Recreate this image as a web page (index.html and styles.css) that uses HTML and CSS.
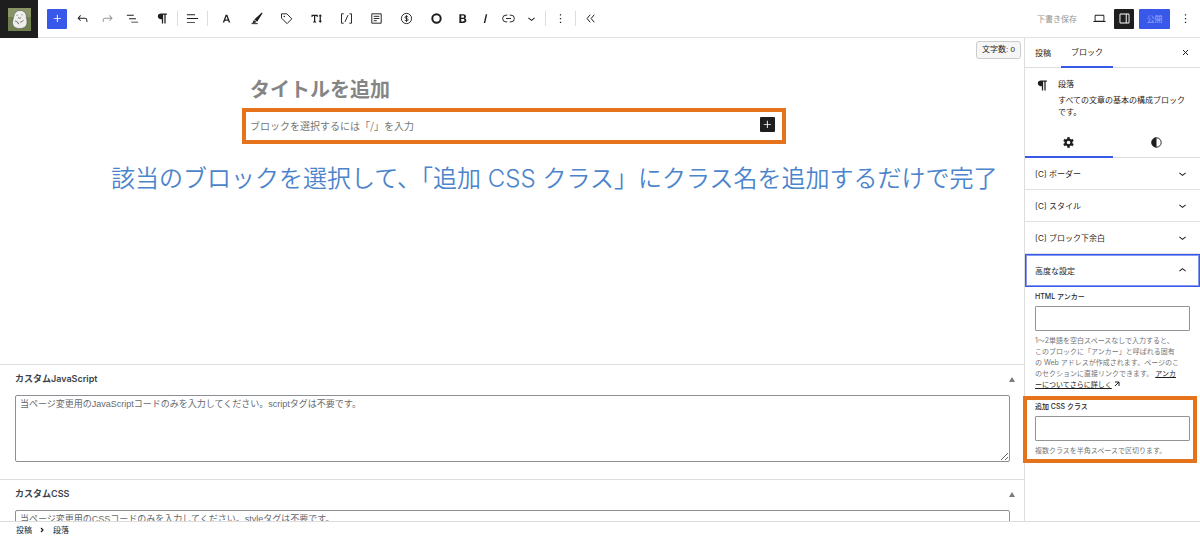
FILE: index.html
```html
<!DOCTYPE html>
<html lang="ja">
<head>
<meta charset="utf-8">
<title>投稿を編集</title>
<link rel="stylesheet" href="styles.css">
</head>
<body>
<header class="topbar">
  <a class="site-logo" href="#" aria-label="サイト">
    <svg width="23" height="23" viewBox="0 0 23 23">
      <rect width="23" height="23" fill="#71804f"/>
      <rect width="23" height="9" fill="#899566"/>
      <path d="M12 2.500c4 0 6.300 2.600 6.300 6.500 0 1.500.7 2.500.7 5 0 4-2.500 6.500-7 6.500s-7.500-2-7.500-6c0-2 .6-3.200 1-5C6.200 5.500 8 2.500 12 2.500z" fill="#eeeeec" stroke="#444" stroke-width=".5"/>
      <path d="M8.500 7.300h1M13.500 6.800h1M10 9.500c1 1 2.500.9 3.200-.2M7 13c1.500 0 2.500 1 3.500 2M15.500 12.500c-1.500.5-2 1.500-3.500 2M9 14.500l2 1.500" fill="none" stroke="#555" stroke-width=".8"/>
    </svg>
  </a>
  <div class="tools">
    <button class="add" aria-label="追加"><svg class="ic" viewBox="0 0 24 24"><path d="M11 12.500V17.500H12.500V12.500H17.500V11H12.500V6H11V11H6V12.500H11Z"/></svg></button>
    <div class="group group-history">
      <button class="tool tool-m" aria-label="元に戻す"><svg class="ic" viewBox="0 0 24 24"><path d="M18.300 11.700c-.6-.6-1.400-.9-2.300-.9H6.700l2.900-3.300-1.100-1-4.500 5L8.500 16l1-1-2.700-2.700H16c.5 0 .9.200 1.300.5 1 1 1 3.400 1 4.500v.3h1.500v-.2c0-1.500 0-4.300-1.500-5.700z"/></svg></button>
      <button class="tool tool-m faded" aria-label="やり直し"><svg class="ic" viewBox="0 0 24 24"><path d="M15.600 6.500l-1.100 1 2.900 3.300H8c-.9 0-1.700.3-2.300.9-1.400 1.500-1.400 4.200-1.400 5.600v.2h1.500v-.3c0-1.100 0-3.500 1-4.500.3-.3.7-.5 1.300-.5h9.200L14.500 15l1.100 1.100 4.600-4.600-4.600-5z"/></svg></button>
      <button class="tool tool-m" aria-label="リスト表示"><svg class="ic" viewBox="0 0 24 24"><path d="M3 6h11v1.500H3V6Zm3.500 5.500h11V13h-11v-1.500ZM21 17H10v1.500h11V17Z"/></svg></button>
    </div>
    <button class="tool tool-l" aria-label="段落"><svg class="ic" viewBox="0 0 24 24"><path d="M4.500 8.500C4.500 5.500 6.700 4 9.500 4H19v2h-2v14h-2V6h-2v14h-2v-7H9.500c-2.800 0-5-1.600-5-4.500z"/></svg></button>
    <span class="sep"></span>
    <button class="tool tool-l" aria-label="配置"><svg class="ic" viewBox="0 0 24 24"><path d="M3 5.200h13v1.500H3zM3 11.300h18v1.500H3zM3 17.400h13v1.500H3z"/></svg></button>
    <span class="sep"></span>
    <div class="group group-format">
      <button class="tool tool-l" aria-label="文字"><svg class="ic" viewBox="0 0 24 24"><path d="M10.700 6h2.600L18 18.500h-2.400l-1-3H9.400l-1.100 3H6L10.700 6zM12 8.200l-1.900 5.400h3.800L12 8.200z"/></svg></button>
      <button class="tool tool-l" aria-label="マーカー"><svg class="ic" viewBox="0 0 24 24"><path d="M20.500 2.500l1.200 1.200L13 17l-4.500-3.500zM7.800 14.200l4 3.300c-1.800 1.600-4.300 2-6.300 1.500z"/><path d="M4 19.500h10v1.500H4z"/></svg></button>
      <button class="tool tool-l" aria-label="タグ"><svg class="ic" viewBox="0 0 24 24"><path d="M4 4.500h8.500l8 8-7.500 7.700-9-8.700z" fill="none" stroke="currentColor" stroke-width="1.500" stroke-linejoin="round"/><circle cx="8.500" cy="8.700" r="1.200"/></svg></button>
      <button class="tool tool-l" aria-label="文字サイズ"><svg class="ic" viewBox="0 0 24 24"><path d="M4 6h10v3.500h-1.500L12 8h-2v8.500l1.500.5v1.500h-5V17l1.500-.5V8H6l-.5 1.500H4zM18 5l2.800 3.500H19v7h1.800L18 19l-2.800-3.500H17v-7h-1.800z"/></svg></button>
      <button class="tool tool-l" aria-label="ショートコード"><svg class="ic" viewBox="0 0 24 24"><path d="M7.500 4.500H4v15h3.500M16.500 4.500H20v15h-3.500M14.500 6.500l-5 11" fill="none" stroke="currentColor" stroke-width="1.500"/></svg></button>
      <button class="tool tool-l" aria-label="メモ"><svg class="ic" viewBox="0 0 24 24"><path d="M4.500 4.500h15v15h-15zM7.500 8.500h9M7.500 12h9M7.500 15.500h5" fill="none" stroke="currentColor" stroke-width="1.500"/></svg></button>
      <button class="tool tool-l" aria-label="価格"><svg class="ic" viewBox="0 0 24 24"><circle cx="12" cy="12" r="8.200" fill="none" stroke="currentColor" stroke-width="1.500"/><path d="M14.700 9.700c-.6-1-1.500-1.300-2.700-1.300-1.400 0-2.500.6-2.500 1.700 0 2.600 5.100 1.300 5.100 3.800 0 1.300-1.200 2-2.600 2-1.300 0-2.400-.6-2.800-1.600M12 6.800v10.400" fill="none" stroke="currentColor" stroke-width="1.500"/></svg></button>
      <button class="tool tool-l" aria-label="丸"><svg class="ic" viewBox="0 0 24 24"><circle cx="12" cy="12" r="6.700" fill="none" stroke="currentColor" stroke-width="3.200"/></svg></button>
      <button class="tool tool-s" aria-label="太字"><svg class="ic" viewBox="0 0 24 24"><path d="M7 5h6c2.800 0 4.500 1.400 4.500 3.600 0 1.500-.8 2.600-2 3.100 1.600.4 2.700 1.600 2.700 3.400 0 2.500-1.900 3.900-4.900 3.900H7V5zm3 2.300v3.400h2.500c1.300 0 2-.6 2-1.700s-.7-1.700-2-1.700H10zm0 5.600v3.800h2.800c1.500 0 2.300-.6 2.300-1.900s-.8-1.900-2.300-1.900H10z"/></svg></button>
      <button class="tool tool-s" aria-label="斜体"><svg class="ic" viewBox="0 0 24 24"><path d="M12.500 5h2.300L11.500 19H9.200z"/></svg></button>
      <button class="tool tool-s" aria-label="リンク"><svg class="ic" viewBox="0 0 24 24"><path d="M10 17.400H8a5.400 5.400 0 0 1 0-10.800h2M14 6.600h2a5.400 5.400 0 0 1 0 10.800h-2M8 12h8" fill="none" stroke="currentColor" stroke-width="1.500"/></svg></button>
      <button class="tool tool-s" aria-label="さらに表示"><svg class="ic" viewBox="0 0 24 24"><path d="M17.500 11.600L12 16l-5.500-4.400.9-1.200L12 14l4.500-3.600 1 1.200z"/></svg></button>
    </div>
    <span class="sep"></span>
    <button class="tool tool-l" aria-label="オプション"><svg class="ic" viewBox="0 0 24 24"><path d="M13 19h-2v-2h2v2zm0-6h-2v-2h2v2zm0-6h-2V5h2v2z"/></svg></button>
    <span class="sep"></span>
    <button class="tool tool-l" aria-label="折りたたむ"><svg class="ic" viewBox="0 0 24 24"><path d="M11.500 6L6.500 12l5 6M18 6l-5 6 5 6" fill="none" stroke="currentColor" stroke-width="1.600"/></svg></button>
  </div>
  <div class="actions">
    <button class="save">下書き保存</button>
    <button class="action" aria-label="表示"><svg class="ic" viewBox="0 0 24 24"><path d="M20.500 16h-.7V8c0-1.100-.9-2-2-2H6.200c-1.100 0-2 .9-2 2v8h-.7c-.8 0-1.500.7-1.500 1.500h20c0-.8-.7-1.500-1.500-1.500zM5.700 8c0-.3.200-.5.500-.5h11.600c.3 0 .5.200.5.500v7.600H5.700V8z"/></svg></button>
    <button class="action action-on" aria-label="設定"><svg class="ic" viewBox="0 0 24 24"><path d="M18 4H6c-1.100 0-2 .9-2 2v12c0 1.100.9 2 2 2h12c1.100 0 2-.9 2-2V6c0-1.100-.9-2-2-2zm-4 14.500H6c-.3 0-.5-.2-.5-.5V6c0-.3.2-.5.5-.5h8v13zm4.500-.5c0 .3-.2.500-.5.500h-2.500v-13H18c.3 0 .5.200.5.500v12z"/></svg></button>
    <button class="publish">公開</button>
    <button class="action" aria-label="オプション"><svg class="ic" viewBox="0 0 24 24"><path d="M13 19h-2v-2h2v2zm0-6h-2v-2h2v2zm0-6h-2V5h2v2z"/></svg></button>
  </div>
</header>

<div class="workspace">
  <main class="editor">
    <section class="canvas">
      <span class="count">文字数: 0</span>
      <div class="post">
        <h1 class="post-title">タイトルを追加</h1>
        <div class="block marked">
          <p class="prompt">ブロックを選択するには「/」を入力</p>
          <button class="inserter" aria-label="ブロックを追加"><svg class="ic" viewBox="0 0 24 24"><path d="M11 12.500V17.500H12.500V12.500H17.500V11H12.500V6H11V11H6V12.500H11Z"/></svg></button>
        </div>
      </div>
      <p class="note">該当のブロックを選択して、「追加 CSS クラス」にクラス名を追加するだけで完了</p>
    </section>
    <section class="metaboxes">
      <div class="metabox">
        <div class="metabox-head"><label for="js">カスタムJavaScript</label><button class="toggle" aria-label="閉じる"><svg width="6" height="5" viewBox="0 0 6 5"><path d="M3 0l3 5H0z"/></svg></button></div>
        <textarea id="js" class="code" placeholder="当ページ変更用のJavaScriptコードのみを入力してください。scriptタグは不要です。"></textarea>
      </div>
      <div class="metabox">
        <div class="metabox-head"><label for="css">カスタムCSS</label><button class="toggle" aria-label="閉じる"><svg width="6" height="5" viewBox="0 0 6 5"><path d="M3 0l3 5H0z"/></svg></button></div>
        <textarea id="css" class="code" placeholder="当ページ変更用のCSSコードのみを入力してください。styleタグは不要です。"></textarea>
      </div>
    </section>
  </main>

  <aside class="sidebar">
    <div class="tabs">
      <button class="tab">投稿</button>
      <button class="tab tab-on">ブロック</button>
      <button class="close" aria-label="閉じる"><svg width="7" height="7" viewBox="0 0 7 7"><path d="M1 1l5 5M6 1L1 6" stroke="currentColor"/></svg></button>
    </div>
    <div class="card">
      <svg class="ic" viewBox="0 0 24 24"><path d="M4.500 8.500C4.500 5.500 6.700 4 9.500 4H19v2h-2v14h-2V6h-2v14h-2v-7H9.500c-2.800 0-5-1.600-5-4.500z"/></svg>
      <div>
        <h2 class="card-title">段落</h2>
        <p class="card-text">すべての文章の基本の構成ブロックです。</p>
      </div>
    </div>
    <div class="subtabs">
      <button class="subtab subtab-on" aria-label="設定"><svg class="ic" viewBox="0 0 24 24"><g transform="translate(12 12)"><rect x="-2" y="-8.500" width="4" height="17"/><rect x="-2" y="-8.500" width="4" height="17" transform="rotate(60)"/><rect x="-2" y="-8.500" width="4" height="17" transform="rotate(120)"/><circle r="4.600" fill="#fff" stroke="currentColor" stroke-width="3.400"/></g></svg></button>
      <button class="subtab" aria-label="スタイル"><svg class="ic" viewBox="0 0 24 24"><circle cx="12" cy="12" r="7.500" fill="none" stroke="currentColor" stroke-width="1.500"/><path d="M12 4a8 8 0 0 0 0 16z"/></svg></button>
    </div>
    <button class="panel">[C] ボーダー<svg class="ic" viewBox="0 0 24 24"><path d="M17.500 11.600L12 16l-5.500-4.400.9-1.200L12 14l4.500-3.600 1 1.200z"/></svg></button>
    <button class="panel">[C] スタイル<svg class="ic" viewBox="0 0 24 24"><path d="M17.500 11.600L12 16l-5.500-4.400.9-1.200L12 14l4.500-3.600 1 1.200z"/></svg></button>
    <button class="panel">[C] ブロック下余白<svg class="ic" viewBox="0 0 24 24"><path d="M17.500 11.600L12 16l-5.500-4.400.9-1.200L12 14l4.500-3.600 1 1.200z"/></svg></button>
    <button class="panel panel-focus">高度な設定<svg class="ic" viewBox="0 0 24 24"><path d="M6.500 12.400L12 8l5.500 4.400-.9 1.200L12 10l-4.500 3.600-1-1.200z"/></svg></button>
    <div class="fields">
      <div class="field">
        <label for="anchor">HTML アンカー</label>
        <input id="anchor" type="text">
        <p class="help">1〜2単語を空白スペースなしで入力すると、<br>このブロックに「アンカー」と呼ばれる固有<br>の Web アドレスが作成されます。ページのこ<br>のセクションに直接リンクできます。 <a href="#">アンカ<br>ーについてさらに詳しく</a> <svg class="out" width="6" height="6" viewBox="0 0 6 6"><path d="M1 1h4v4M5 1L1 5" fill="none" stroke="currentColor"/></svg></p>
      </div>
      <div class="field marked">
        <label for="classes">追加 CSS クラス</label>
        <input id="classes" type="text">
        <p class="help">複数クラスを半角スペースで区切ります。</p>
      </div>
    </div>
  </aside>
</div>

<footer class="crumbs">
  <span>投稿</span>
  <svg width="5" height="6" viewBox="0 0 5 6"><path d="M1 1l2 2-2 2" fill="none" stroke="currentColor" stroke-width="1.200"/></svg>
  <span>段落</span>
</footer>
</body>
</html>
```
FILE: styles.css
```css
* { box-sizing: border-box; }

body {
  margin: 0;
  height: 100vh;
  display: flex;
  flex-direction: column;
  overflow: hidden;
  background: #fff;
  color: #1e1e1e;
  font-family: Inter, "Noto Sans CJK JP", sans-serif;
  font-size: 8px;
  line-height: 12px;
}

h1, h2, p { margin: 0; }

button {
  display: flex;
  align-items: center;
  justify-content: center;
  padding: 0;
  border: 0;
  background: none;
  color: inherit;
  font: inherit;
  white-space: nowrap;
}

.ic {
  width: 15px;
  height: 15px;
  flex: none;
  fill: currentColor;
}

/* top bar */
.topbar {
  flex: none;
  height: 38px;
  display: flex;
  border-bottom: 1px solid #e2e2e2;
}

.site-logo {
  width: 38px;
  height: 38px;
  flex: none;
  display: flex;
  align-items: center;
  justify-content: center;
  background: #1e1e1e;
}

.tools {
  flex: 1;
  display: flex;
  align-items: center;
  padding-left: 9px;
}

.add {
  width: 20px;
  height: 20px;
  border-radius: 1px;
  background: #3858e9;
  color: #fff;
}

.group { display: flex; }
.group-history { padding: 0 2px 0 3px; }
.group-format { padding: 0 2px 0 3px; }

.tool { height: 30px; }
.tool-s { width: 23px; }
.tool-m { width: 25px; }
.tool-l { width: 30px; }
.faded { color: #949494; }
.sep + .tool-l { width: 29px; }

.sep {
  width: 1px;
  height: 15px;
  background: #ddd;
}

.actions {
  display: flex;
  align-items: center;
  gap: 5px;
  padding-right: 5px;
}

.save {
  margin-right: 7px;
  color: #949494;
}

.action {
  width: 20px;
  height: 20px;
}

.action-on {
  border-radius: 1px;
  background: #1e1e1e;
  color: #fff;
}

.publish {
  width: 31px;
  height: 20px;
  border-radius: 1px;
  background: #3858e9;
  color: #98a9f4;
}

/* editor */
.workspace {
  flex: 1;
  min-height: 0;
  display: flex;
}

.editor {
  flex: 1;
  min-width: 0;
  display: flex;
  flex-direction: column;
}

.canvas {
  position: relative;
  flex: 1;
  padding: 36px 0 0 4px;
}

.count {
  position: absolute;
  top: 3px;
  right: 3px;
  padding: 2px 5px;
  border: 1px solid #ccc;
  border-radius: 3px;
  background: #f6f6f6;
  font-family: "Liberation Sans", "Noto Sans CJK JP", sans-serif;
}

.post {
  max-width: 544px;
  margin: 0 auto;
}

.post-title {
  padding: 0 8px 4px;
  color: #858585;
  font-size: 20px;
  line-height: 30px;
  font-weight: 700;
  font-family: "Noto Sans CJK JP", sans-serif;
}

.marked { border: 4px solid #e4731c; }

.block {
  display: flex;
  align-items: center;
  justify-content: space-between;
  height: 36px;
  padding: 0 7px 4px 4px;
}

.prompt {
  padding-top: 4px;
  color: #767676;
  font-family: "Noto Sans CJK JP", sans-serif;
  font-size: 10px;
}

.inserter {
  width: 15px;
  height: 15px;
  border-radius: 1px;
  background: #1e1e1e;
  color: #fff;
}

.note {
  padding: 17px 0 0 107px;
  color: #4c84cc;
  font-family: Inter, "Noto Sans CJK JP", sans-serif;
  font-size: 24px;
  font-weight: 350;
  line-height: 36px;
  white-space: nowrap;
}

/* meta boxes */
.metaboxes {
  flex: 0 0 157px;
  overflow: hidden;
  color: #3c434a;
}

.metabox {
  height: 115px;
  padding: 0 14px 0 15px;
  border-top: 1px solid #ddd;
}

.metabox-head {
  display: flex;
  align-items: center;
  justify-content: space-between;
  height: 30px;
  padding-bottom: 2px;
  font-size: 9px;
  font-weight: 600;
}

.toggle { width: 6px; margin-right: -5px; }
.toggle svg { fill: #787c82; }

.code {
  display: block;
  width: 100%;
  height: 67px;
  padding: 2px 4px;
  border: 1px solid #8c8f94;
  border-radius: 2px;
  font-family: "Liberation Sans", "Noto Sans CJK JP", sans-serif;
  font-size: 9px;
  line-height: 12px;
}

.code::placeholder { color: #646970; }

/* sidebar */
.sidebar {
  flex: 0 0 176px;
  border-left: 1px solid #ddd;
}

.tabs {
  display: flex;
  height: 30px;
  border-bottom: 1px solid #ddd;
}

.tab { padding: 0 10px; }

.tab-on {
  height: 30px;
  border-bottom: 2px solid #3858e9;
}

.close {
  width: 20px;
  margin: 0 5px 0 auto;
}

.card {
  display: flex;
  gap: 8px;
  padding: 10px;
}

.card-title {
  padding-bottom: 4px;
  font-size: 8px;
  line-height: 12px;
  font-weight: 400;
}

.card-text {
  margin-right: -2px;
  line-height: 12px;
}

.subtabs {
  display: flex;
  height: 30px;
  border-bottom: 1px solid #ddd;
}

.subtab {
  flex: 1;
  height: 30px;
  border-bottom: 2px solid transparent;
}

.subtab-on { border-bottom-color: #3858e9; }

.panel {
  width: 100%;
  height: 32px;
  padding: 0 10px;
  justify-content: space-between;
  border-bottom: 1px solid #e0e0e0;
}

.panel-focus {
  height: 33px;
  padding: 0 9px;
  border: 1px solid #3858e9;
  outline: 1px solid #8497f1;
  outline-offset: -2px;
}

.fields { padding: 4px 10px 0; }

.field label {
  display: block;
  font-size: 7px;
  line-height: 12px;
  font-weight: 500;
}

.field input {
  display: block;
  width: 100%;
  height: 25px;
  margin: 3px 0 4px;
  border: 1px solid #949494;
  border-radius: 1px;
}

.help {
  color: #757575;
  font-size: 7px;
  line-height: 11px;
  white-space: nowrap;
}

.help a { color: #1e1e1e; }
.out { color: #1e1e1e; }

.field.marked {
  margin: 6px -7px 0 -12px;
  padding: 1px 3px 3px 8px;
}

/* breadcrumb */
.crumbs {
  flex: none;
  height: 16px;
  display: flex;
  align-items: center;
  gap: 8px;
  padding-left: 16px;
  border-top: 1px solid #ddd;
}
```
